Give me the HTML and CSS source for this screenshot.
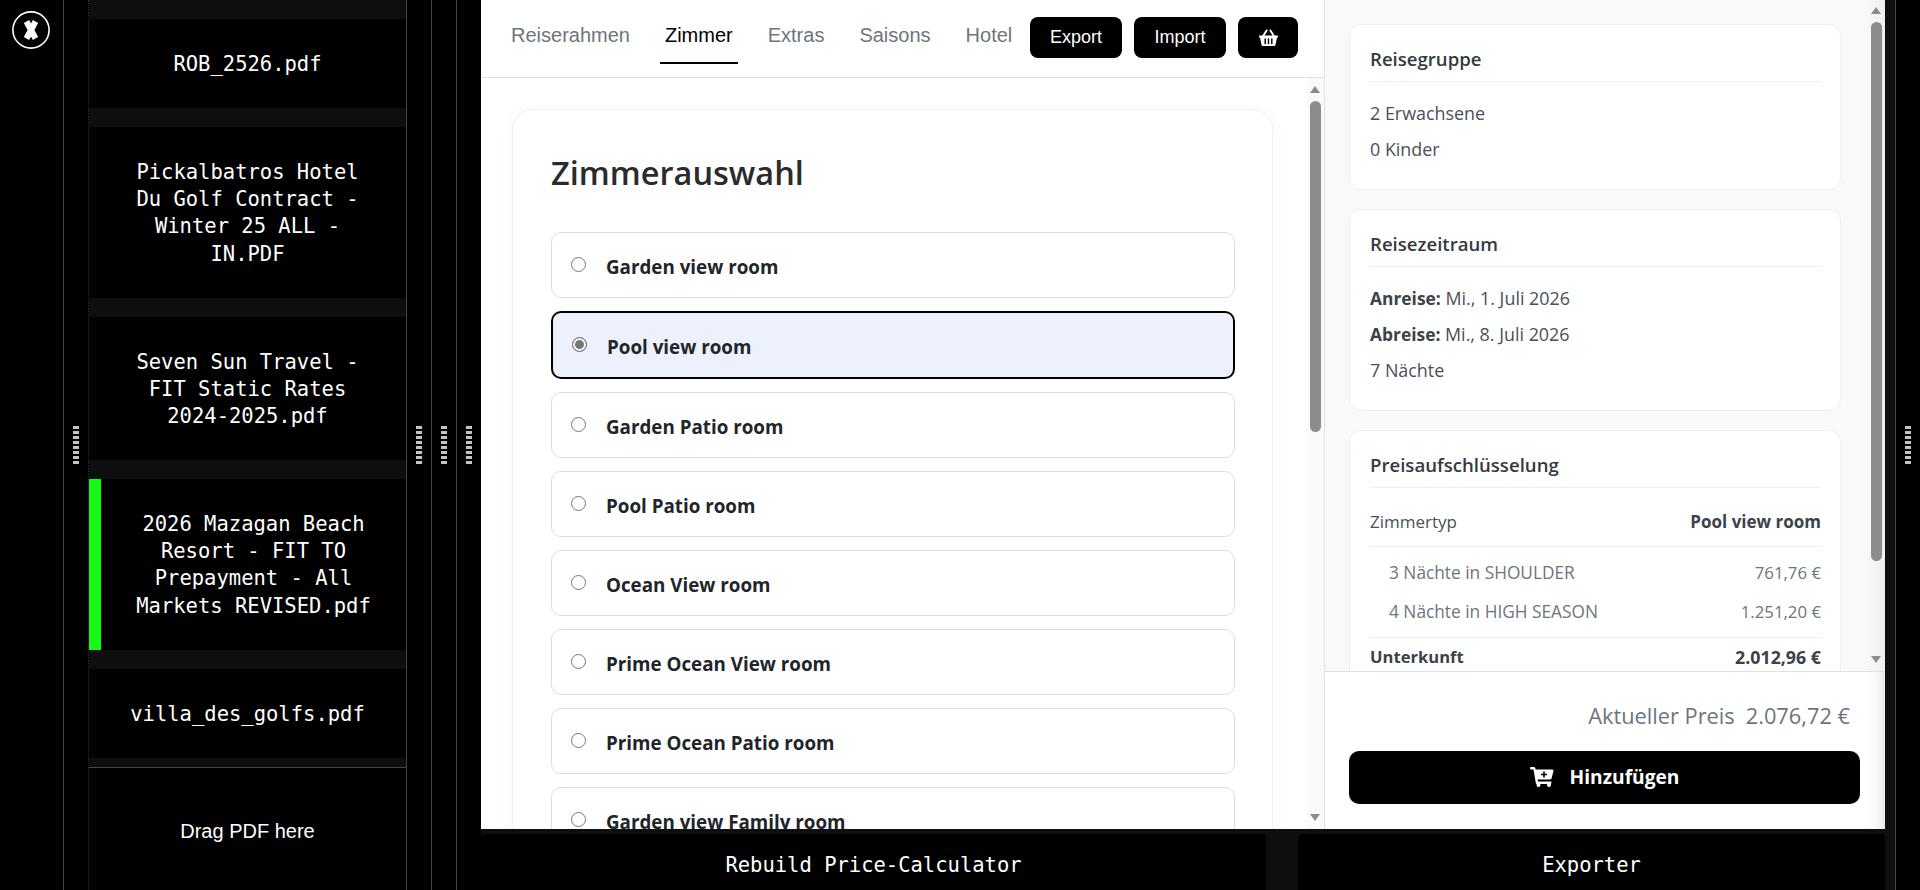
FILE: index.html
```html
<!DOCTYPE html>
<html lang="de">
<head>
<meta charset="utf-8">
<title>Rebuild Price-Calculator</title>
<link rel="stylesheet" href="styles.css">
</head>
<body>
<div class="app">
  <aside class="rail">
    <button class="close-btn" aria-label="Schließen">
      <svg viewBox="0 0 38 38" width="38" height="38"><circle cx="19" cy="19" r="18.100" fill="none" stroke="#fff" stroke-width="1.600"/><path d="M14.500 10.500 23.500 27.500M23.500 10.500 14.500 27.500" fill="none" stroke="#fff" stroke-width="6"/></svg>
    </button>
  </aside>
  <div class="splitter"><span class="grip"></span></div>
  <section class="files">
    <div class="file-list">
      <div class="file">ROB_2526.pdf</div>
      <div class="file">Pickalbatros Hotel Du Golf Contract - Winter 25 ALL - IN.PDF</div>
      <div class="file">Seven Sun Travel - FIT Static Rates 2024-2025.pdf</div>
      <div class="file active">2026 Mazagan Beach Resort - FIT TO Prepayment - All Markets REVISED.pdf</div>
      <div class="file">villa_des_golfs.pdf</div>
    </div>
    <div class="drop">Drag PDF here</div>
  </section>
  <div class="splitter line"><span class="grip"></span></div>
  <div class="splitter line"><span class="grip"></span></div>
  <div class="splitter"><span class="grip"></span></div>
  <main class="workspace">
    <div class="calculator">
      <div class="left-col">
        <header class="topbar">
          <nav class="tabs">
            <a class="tab">Reiserahmen</a>
            <a class="tab current">Zimmer</a>
            <a class="tab">Extras</a>
            <a class="tab">Saisons</a>
            <a class="tab">Hotel</a>
          </nav>
          <div class="actions">
            <button class="act">Export</button>
            <button class="act">Import</button>
            <button class="act basket" aria-label="Warenkorb">
              <svg viewBox="0 0 22 18" width="21" height="17"><path d="M1 7h20v2h-1l-1.600 7.600a1.600 1.600 0 0 1-1.600 1.400H5.200a1.600 1.600 0 0 1-1.600-1.400L2 9H1z" fill="#fff"/><path d="M5 8 9 1.500M17 8 13 1.500" stroke="#fff" stroke-width="2" stroke-linecap="round" fill="none"/><path d="M7.500 10.500v5M11 10.500v5M14.500 10.500v5" stroke="#000" stroke-width="1.500" stroke-linecap="round"/></svg>
            </button>
          </div>
        </header>
        <div class="scroller">
          <div class="scroll-content">
            <section class="room-card">
              <h2 class="room-title">Zimmerauswahl</h2>
              <div class="rooms">
                <label class="room"><span class="radio"></span>Garden view room</label>
                <label class="room selected"><span class="radio on"></span>Pool view room</label>
                <label class="room"><span class="radio"></span>Garden Patio room</label>
                <label class="room"><span class="radio"></span>Pool Patio room</label>
                <label class="room"><span class="radio"></span>Ocean View room</label>
                <label class="room"><span class="radio"></span>Prime Ocean View room</label>
                <label class="room"><span class="radio"></span>Prime Ocean Patio room</label>
                <label class="room"><span class="radio"></span>Garden view Family room</label>
              </div>
            </section>
          </div>
          <div class="sb main-sb"><i class="up"></i><b class="thumb"></b><i class="down"></i></div>
        </div>
      </div>
      <aside class="summary">
        <div class="summary-scroll">
          <div class="summary-content">
            <section class="info">
              <h3>Reisegruppe</h3>
              <p>2 Erwachsene</p>
              <p>0 Kinder</p>
            </section>
            <section class="info">
              <h3>Reisezeitraum</h3>
              <p><strong>Anreise:</strong> Mi., 1. Juli 2026</p>
              <p><strong>Abreise:</strong> Mi., 8. Juli 2026</p>
              <p>7 Nächte</p>
            </section>
            <section class="info">
              <h3>Preisaufschlüsselung</h3>
              <div class="row head"><span>Zimmertyp</span><strong>Pool view room</strong></div>
              <div class="row sub"><span>3 Nächte in SHOULDER</span><span class="amount">761,76 €</span></div>
              <div class="row sub"><span>4 Nächte in HIGH SEASON</span><span class="amount">1.251,20 €</span></div>
              <div class="row total"><strong>Unterkunft</strong><strong class="sum">2.012,96 €</strong></div>
            </section>
          </div>
          <div class="sb side-sb"><i class="up"></i><b class="thumb"></b><i class="down"></i></div>
        </div>
        <footer class="checkout">
          <div class="price"><span>Aktueller Preis</span><span>2.076,72 €</span></div>
          <button class="add">
            <svg viewBox="0 0 24 20" width="24" height="20"><path d="M0 1.200C0 .5.5 0 1.200 0h2.400c.9 0 1.600.6 1.800 1.400L5.600 2.400h16.600c.9 0 1.500.8 1.300 1.700l-1.900 7.200c-.2.7-.9 1.200-1.600 1.200H7.600l.4 2h12.300c.7 0 1.200.5 1.200 1.200s-.5 1.200-1.200 1.200H7c-.6 0-1.100-.4-1.200-1L3.500 2.400H1.200C.5 2.400 0 1.900 0 1.200z" fill="#fff"/><circle cx="8.500" cy="18" r="2" fill="#fff"/><circle cx="19" cy="18" r="2" fill="#fff"/><path d="M14 4.500v6M11 7.500h6" stroke="#000" stroke-width="1.600"/></svg>
            <span>Hinzufügen</span>
          </button>
        </footer>
      </aside>
    </div>
    <div class="bottom">
      <button class="bottom-btn rebuild">Rebuild Price-Calculator</button>
      <button class="bottom-btn exporter">Exporter</button>
    </div>
  </main>
  <div class="edge"></div>
  <div class="splitter end"><span class="grip"></span></div>
</div>
</body>
</html>
```
FILE: styles.css
```css
* { box-sizing: border-box; }
html, body { margin: 0; height: 100%; background: #000; overflow: hidden; }
body { font-family: "Open Sans", "Noto Sans", sans-serif; color: #212529; }
button { font: inherit; border: 0; cursor: pointer; }
h2, h3, p { margin: 0; }

.app { display: flex; height: 890px; width: 1920px; background: #000; }

.rail { width: 64px; flex: none; border-right: 1px solid #444; padding: 11px 0 0 12px; }
.close-btn { display: block; width: 38px; height: 38px; padding: 0; background: none; }
.close-btn svg { display: block; }

.splitter { width: 24px; flex: none; display: flex; align-items: center; justify-content: center; background: #000; }
.splitter.line { width: 25px; border-right: 1px solid #444; }
.grip { display: block; width: 6px; height: 38px;
  background: repeating-linear-gradient(90deg, #c4c4c4 0 2.6px, transparent 2.6px 3.4px);
  -webkit-mask-image: repeating-linear-gradient(180deg, #000 0 3px, transparent 3px 5px);
  mask-image: repeating-linear-gradient(180deg, #000 0 3px, transparent 3px 5px); }

.files { width: 319px; flex: none; display: flex; flex-direction: column; border-left: 1px dotted #2a2a2a; border-right: 1px solid #444; background: #000; }
.file-list { background: #0c0e10; padding-top: 19px; display: flex; flex-direction: column; gap: 18.8px; padding-bottom: 9.5px; border-bottom: 1px solid #444; }
.file { background: #000; color: #fff; font-family: "DejaVu Sans Mono", "Liberation Mono", monospace; font-size: 20.5px; line-height: 27.2px; text-align: center; padding: 32px 32px 30px; }
.file.active { border-left: 12px solid #14fa14; }
.drop { flex: 1; display: flex; align-items: center; justify-content: center; color: #fff; font-family: "Liberation Sans", Arial, sans-serif; font-size: 20px; padding-top: 4px; }

.workspace { width: 1404px; flex: none; display: flex; flex-direction: column; }
.calculator { height: 829px; flex: none; display: flex; background: #fff; }
.left-col { width: 843px; flex: none; display: flex; flex-direction: column; }
.topbar { height: 78px; flex: none; display: flex; justify-content: space-between; align-items: flex-start; padding: 0 26px 0 25px; border-bottom: 1px solid #dee2e6; font-family: "Liberation Sans", Arial, sans-serif; }
.tabs { display: flex; gap: 25px; }
.tab { display: block; height: 64px; line-height: 70px; padding: 0 5px; font-size: 20px; color: #6c757d; }
.tab.current { color: #000; border-bottom: 2px solid #000; }
.actions { display: flex; gap: 12px; padding-top: 17px; }
.act { height: 41px; width: 92px; background: #000; color: #fff; border-radius: 8px; font-size: 18px; display: flex; align-items: center; justify-content: center; }
.basket { width: 60px; }

.scroller { flex: 1; min-height: 0; display: flex; overflow: hidden; }
.scroll-content { flex: 1; padding: 31px 34px 0 31px; overflow: hidden; }
.room-card { border: 1px solid #f0f0f0; border-radius: 20px; box-shadow: 0 4px 20px rgba(0,0,0,.03); padding: 39px 37px 40px 38px; background: #fff; }
.room-title { font-size: 32.5px; font-weight: 600; line-height: 48px; color: #2b2b2b; margin-bottom: 35px; }
.rooms { display: flex; flex-direction: column; gap: 13px; }
.room { height: 66px; flex: none; display: flex; align-items: center; gap: 20px; padding: 3px 19px 0; border: 1px solid #dedede; border-radius: 10px; font-size: 18.8px; font-weight: 700; color: #212529; background: #fff; }
.room.selected { height: 68px; border: 2px solid #000; background: #edf1fd; }
.radio { width: 15px; height: 15px; flex: none; border-radius: 50%; border: 1px solid #767676; background: #fff; position: relative; top: -2.5px; }
.radio.on { border: 1.5px solid #767676; box-shadow: inset 0 0 0 2px #fff; background: #767676; }

.sb { width: 17px; flex: none; position: relative; background: #fafafa; }
.sb .thumb { position: absolute; left: 3px; width: 11px; background: #8c8c8c; border-radius: 6px; }
.sb i { position: absolute; left: 3px; width: 0; height: 0; border-left: 5.5px solid transparent; border-right: 5.5px solid transparent; }
.sb .up { border-bottom: 7px solid #8c8c8c; top: 8px; }
.sb .down { border-top: 7px solid #8c8c8c; bottom: 8px; }
.main-sb .thumb { top: 23px; height: 331px; }
.side-sb { background: linear-gradient(90deg, #f8f9fa, #eeeeee); }
.side-sb .thumb { top: 22px; height: 539px; }
.side-sb .up { top: 7px; }

.summary { flex: 1; min-width: 0; display: flex; flex-direction: column; border-left: 1px solid #dee2e6; background: #f8f9fa; }
.summary-scroll { flex: 1; min-height: 0; display: flex; overflow: hidden; }
.summary-content { flex: 1; padding: 24px 27px 0 24px; display: flex; flex-direction: column; gap: 18.5px; overflow: hidden; }
.info { flex: none; background: #fff; border: 1px solid #eef0f2; border-radius: 12px; padding: 20px 19px 20px 20px; font-size: 17.9px; color: #495057; }
.info h3 { font-size: 18.6px; font-weight: 600; color: #343a40; line-height: 28px; padding-bottom: 8px; border-bottom: 1px solid #eceef0; margin-bottom: 18px; }
.info p { line-height: 26px; margin-bottom: 10.2px; }
.info p:last-child { margin-bottom: 7px; }
.info p strong { font-size: 17.4px; }
.info strong { font-weight: 700; color: #3c4248; }
.row { display: flex; justify-content: space-between; font-size: 17px; }
.row.head { line-height: 26px; padding: 3.5px 0 11px; border-bottom: 1px solid #eceef0; }
.row.sub { color: #6c757d; padding-left: 19px; line-height: 26px; margin-top: 13px; font-size: 17.3px; }
.row .amount { font-size: 16.8px; }
.row.total { margin-top: 12px; padding-top: 6px; border-top: 1px solid #eceef0; line-height: 26px; font-size: 16.6px; }
.row .sum { font-size: 17.8px; }

.checkout { height: 158px; flex: none; background: #fff; border-top: 1px solid #dee2e6; box-shadow: inset -16px 0 16px -12px rgba(0,0,0,.12); padding: 23px 25px 0 24px; }
.price { display: flex; justify-content: flex-end; gap: 11px; font-size: 21.8px; line-height: 42px; color: #6c757d; padding-right: 10px; }
.add { margin-top: 14px; width: 511px; height: 53px; background: #000; color: #fff; border-radius: 10px; font-size: 19.2px; font-weight: 700; display: flex; align-items: center; justify-content: center; gap: 16px; line-height: 24px; padding-bottom: 2px; }

.bottom { flex: 1; background: #0c0e10; padding-top: 5px; display: flex; justify-content: space-between; }
.bottom-btn { background: #000; color: #fff; font-family: "DejaVu Sans Mono", "Liberation Mono", monospace; font-size: 20.5px; border-radius: 4px 4px 0 0; padding-top: 7px; }
.rebuild { width: 785px; }
.exporter { width: 587px; }

.edge { width: 10px; flex: none; background: #0c0e10; }
.splitter.end { width: 25px; border-left: 1px solid #444; }
```
